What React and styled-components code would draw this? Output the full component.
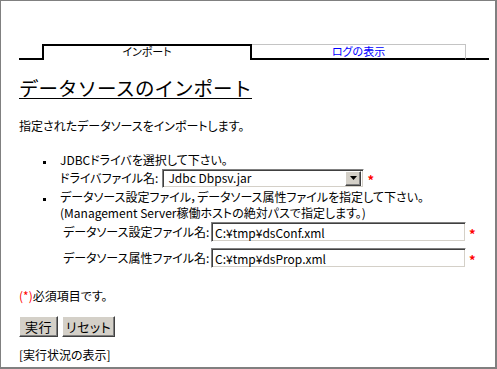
import React from "react"
import styled, { createGlobalStyle } from "styled-components"

const GlobalStyle = createGlobalStyle`
  html, body {
    margin: 0;
    padding: 0;
    background: #ffffff;
  }
  body {
    font-family: "Noto Sans CJK JP", "DejaVu Sans", sans-serif;
    font-size: 12px;
    color: #000000;
    font-feature-settings: "palt";
  }
`

const Frame = styled("div")`
  width: 497px;
  height: 369px;
  box-sizing: border-box;
  border-top: 1px solid #808080;
  border-left: 1px solid #808080;
  border-right: 2px solid #808080;
  border-bottom: 2px solid #808080;
  padding: 43px 0 0 18px;
  overflow: hidden;
`

const TabBar = styled("div")`
  display: flex;
  height: 16px;
`

const TabEdge = styled("div")`
  width: 23px;
  box-sizing: border-box;
  border-bottom: 2px solid #000;
`

const Tab = styled("div")`
  box-sizing: border-box;
  display: flex;
  justify-content: center;
  align-items: center;
  font-size: 11px;
  line-height: 12px;
  width: ${(p) => (p.$active ? "210px" : "214px")};
  color: ${(p) => (p.$active ? "#000" : "#0000ff")};
  border-top: ${(p) => (p.$active ? "2px solid #000" : "1px solid #c4c4c4")};
  border-left: ${(p) => (p.$active ? "2px solid #000" : "none")};
  border-right: ${(p) => (p.$active ? "2px solid #000" : "1px solid #c4c4c4")};
  border-bottom: ${(p) => (p.$active ? "none" : "2px solid #000")};
  padding-bottom: ${(p) => (p.$active ? "4px" : "1px")};
`

const Heading = styled("h1")`
  display: inline-block;
  margin: 18px 0 0;
  font-size: 19.5px;
  font-weight: normal;
  font-feature-settings: normal;
  line-height: 20px;
  border-bottom: 1px solid #000;
`

const Intro = styled("p")`
  margin: 19px 0 0;
  line-height: 16px;
`

const List = styled("ul")`
  list-style: none;
  margin: 18px 0 0;
  padding: 0;
`

const Item = styled("li")`
  display: flex;
  margin-top: ${(p) => p.$top || 0}px;
`

const BulletCol = styled("div")`
  width: 41px;
  flex: none;
  display: flex;
  justify-content: flex-end;
  padding-right: 14px;
  box-sizing: border-box;
`

const Bullet = styled("span")`
  width: 3px;
  height: 3px;
  margin-top: 9px;
  background: #000;
`

const Body = styled("div")`
  display: flex;
  flex-direction: column;
`

const Line = styled("div")`
  line-height: 16px;
  white-space: nowrap;
`

const SelectRow = styled("div")`
  display: flex;
  align-items: center;
  margin-top: 1px;
  height: 18px;
`

const Label = styled("span")`
  line-height: 16px;
  white-space: nowrap;
`

const SelectBox = styled("div")`
  margin-left: 4px;
  width: 202px;
  height: 19px;
  box-sizing: border-box;
  display: flex;
  align-items: center;
  justify-content: space-between;
  background: #fff;
  border-top: 1px solid #808080;
  border-left: 1px solid #808080;
  border-right: 1px solid #ffffff;
  border-bottom: 1px solid #ffffff;
  box-shadow: inset 1px 1px 0 #404040, inset -1px -1px 0 #d4d0c8;
  padding: 2px 2px 2px 5px;
`

const SelectValue = styled("span")`
  line-height: 14px;
`

const ArrowButton = styled("span")`
  width: 16px;
  height: 15px;
  box-sizing: border-box;
  display: flex;
  align-items: center;
  justify-content: center;
  background: #d4d0c8;
  border-top: 1px solid #ffffff;
  border-left: 1px solid #ffffff;
  border-right: 1px solid #404040;
  border-bottom: 1px solid #404040;
  box-shadow: inset -1px -1px 0 #808080;
`

const Star = styled("span")`
  color: #ff0000;
  font-weight: bold;
  font-size: 13px;
  margin-left: 3px;
  line-height: 12px;
  padding-top: 4px;
`

const FieldGrid = styled("div")`
  display: grid;
  grid-template-columns: 151px 255px auto;
  row-gap: 6px;
  align-items: center;
  margin-top: 1px;
`

const FieldLabel = styled("span")`
  padding-left: 3px;
  white-space: nowrap;
  line-height: 16px;
`

const TextInput = styled("input")`
  width: 255px;
  height: 20px;
  box-sizing: border-box;
  margin: 0;
  padding: 0 3px;
  font-family: "Noto Sans CJK JP", "DejaVu Sans", sans-serif;
  font-size: 12px;
  font-feature-settings: "palt";
  color: #000;
  background: #fff;
  outline: none;
  border-top: 1px solid #808080;
  border-left: 1px solid #808080;
  border-right: 1px solid #ffffff;
  border-bottom: 1px solid #ffffff;
  box-shadow: inset 1px 1px 0 #404040, inset -1px -1px 0 #d4d0c8;
`

const Note = styled("p")`
  margin: 20px 0 0;
  line-height: 16px;
`

const Mark = styled("span")`
  color: #ff0000;
`

const Buttons = styled("div")`
  display: flex;
  gap: 4px;
  margin-top: 12px;
`

const Button = styled("button")`
  width: ${(p) => p.$w}px;
  height: 21px;
  box-sizing: border-box;
  padding: 0;
  white-space: nowrap;
  font-family: "Noto Sans CJK JP", "DejaVu Sans", sans-serif;
  font-size: 13px;
  font-feature-settings: "palt";
  line-height: 15px;
  letter-spacing: 0.5px;
  color: #000;
  background: #d4d0c8;
  border-top: 1px solid #ffffff;
  border-left: 1px solid #ffffff;
  border-right: 1px solid #404040;
  border-bottom: 1px solid #404040;
  box-shadow: inset -1px -1px 0 #808080;
`

const Status = styled("p")`
  margin: 10px 0 0;
  line-height: 16px;
`

const App = () => {
  return (
    <>
      <GlobalStyle />
      <Frame>
        <TabBar>
          <TabEdge />
          <Tab $active>インポート</Tab>
          <Tab>ログの表示</Tab>
          <TabEdge />
        </TabBar>
        <Heading>データソースのインポート</Heading>
        <Intro>指定されたデータソースをインポートします。</Intro>
        <List>
          <Item>
            <BulletCol>
              <Bullet />
            </BulletCol>
            <Body>
              <Line>JDBCドライバを選択して下さい。</Line>
              <SelectRow>
                <Label>ドライバファイル名:</Label>
                <SelectBox>
                  <SelectValue>Jdbc Dbpsv.jar</SelectValue>
                  <ArrowButton>
                    <svg width="7" height="4" viewBox="0 0 7 4">
                      <path d="M0 0h7L3.5 4z" fill="#000" />
                    </svg>
                  </ArrowButton>
                </SelectBox>
                <Star>*</Star>
              </SelectRow>
            </Body>
          </Item>
          <Item $top={2}>
            <BulletCol>
              <Bullet />
            </BulletCol>
            <Body>
              <Line>データソース設定ファイル，データソース属性ファイルを指定して下さい。</Line>
              <Line>(Management Server稼働ホストの絶対パスで指定します。)</Line>
              <FieldGrid>
                <FieldLabel>データソース設定ファイル名:</FieldLabel>
                <TextInput readOnly defaultValue="C:¥tmp¥dsConf.xml" />
                <Star>*</Star>
                <FieldLabel>データソース属性ファイル名:</FieldLabel>
                <TextInput readOnly defaultValue="C:¥tmp¥dsProp.xml" />
                <Star>*</Star>
              </FieldGrid>
            </Body>
          </Item>
        </List>
        <Note>
          <Mark>(*)</Mark>必須項目です。
        </Note>
        <Buttons>
          <Button $w={39}>実行</Button>
          <Button $w={53}>リセット</Button>
        </Buttons>
        <Status>[実行状況の表示]</Status>
      </Frame>
    </>
  )
}

export default App
